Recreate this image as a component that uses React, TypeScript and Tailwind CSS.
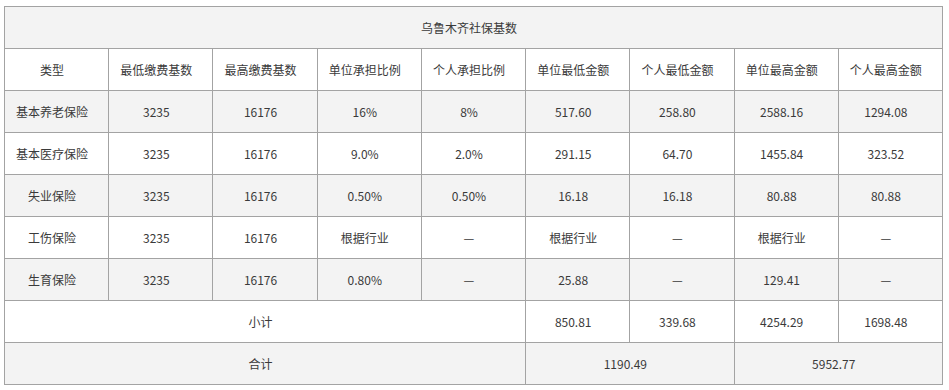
import React from "react";

const headers = [
  "类型",
  "最低缴费基数",
  "最高缴费基数",
  "单位承担比例",
  "个人承担比例",
  "单位最低金额",
  "个人最低金额",
  "单位最高金额",
  "个人最高金额",
];

const rows = [
  ["基本养老保险", "3235", "16176", "16%", "8%", "517.60", "258.80", "2588.16", "1294.08"],
  ["基本医疗保险", "3235", "16176", "9.0%", "2.0%", "291.15", "64.70", "1455.84", "323.52"],
  ["失业保险", "3235", "16176", "0.50%", "0.50%", "16.18", "16.18", "80.88", "80.88"],
  ["工伤保险", "3235", "16176", "根据行业", "—", "根据行业", "—", "根据行业", "—"],
  ["生育保险", "3235", "16176", "0.80%", "—", "25.88", "—", "129.41", "—"],
];

const cell = "h-[42px] border border-[#a3a3a3] p-0 pr-[9px] text-center align-middle";

function App() {
  return (
    <div className="bg-white w-[949px] h-[390px] pt-[6px] pl-[4px]">
      <table
        className="table-fixed border-collapse w-[939px] text-[12px] text-[#3a3a3a]"
        style={{ fontFamily: '"Noto Sans CJK SC", "Microsoft YaHei", sans-serif' }}
      >
        <tbody>
          <tr className="bg-[#f3f3f3]">
            <td colSpan={9} className={cell}>
              乌鲁木齐社保基数
            </td>
          </tr>
          <tr className="bg-white">
            {headers.map((h) => (
              <td key={h} className={cell}>
                {h}
              </td>
            ))}
          </tr>
          {rows.map((r, i) => (
            <tr key={r[0]} className={i % 2 === 0 ? "bg-[#f3f3f3]" : "bg-white"}>
              {r.map((v, j) => (
                <td key={j} className={cell}>
                  {v}
                </td>
              ))}
            </tr>
          ))}
          <tr className="bg-white">
            <td colSpan={5} className={cell}>
              小计
            </td>
            <td className={cell}>850.81</td>
            <td className={cell}>339.68</td>
            <td className={cell}>4254.29</td>
            <td className={cell}>1698.48</td>
          </tr>
          <tr className="bg-[#f3f3f3]">
            <td colSpan={5} className={cell}>
              合计
            </td>
            <td colSpan={2} className={cell}>
              1190.49
            </td>
            <td colSpan={2} className={cell}>
              5952.77
            </td>
          </tr>
        </tbody>
      </table>
    </div>
  );
}

export default App;
